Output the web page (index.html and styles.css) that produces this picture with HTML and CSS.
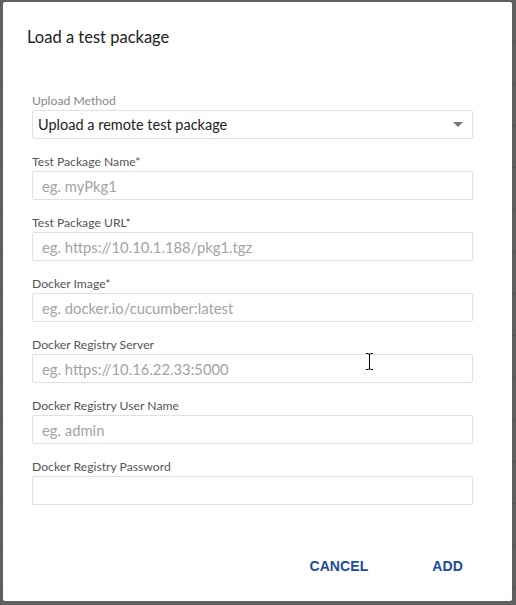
FILE: index.html
```html
<!DOCTYPE html>
<html>
<head>
<meta charset="utf-8">
<link rel="stylesheet" href="styles.css">
</head>
<body>
<div class="backdrop">
  <div class="dialog">
    <h2 class="title">Load a test package</h2>
    <form class="form">
      <div class="field">
        <label class="label label-light">Upload Method</label>
        <div class="select">
          <span class="select-value">Upload a remote test package</span>
          <span class="caret"></span>
        </div>
      </div>
      <div class="field">
        <label class="label">Test Package Name*</label>
        <div class="input"><span class="ph">eg. myPkg1</span></div>
      </div>
      <div class="field">
        <label class="label">Test Package URL*</label>
        <div class="input"><span class="ph">eg. https://10.10.1.188/pkg1.tgz</span></div>
      </div>
      <div class="field">
        <label class="label">Docker Image*</label>
        <div class="input"><span class="ph">eg. docker.io/cucumber:latest</span></div>
      </div>
      <div class="field">
        <label class="label">Docker Registry Server</label>
        <div class="input"><span class="ph">eg. https://10.16.22.33:5000</span></div>
      </div>
      <div class="field">
        <label class="label">Docker Registry User Name</label>
        <div class="input"><span class="ph">eg. admin</span></div>
      </div>
      <div class="field">
        <label class="label">Docker Registry Password</label>
        <div class="input"></div>
      </div>
    </form>
    <div class="actions">
      <button class="btn btn-cancel" type="button">CANCEL</button>
      <button class="btn btn-add" type="button">ADD</button>
    </div>
  </div>
  <svg class="cursor" width="9" height="17" viewBox="0 0 9 17">
    <path d="M1 0.5h2.5M5.5 0.5h2.5M4.5 1v15M1 16.5h2.5M5.5 16.5h2.5M3.5 1h2M3.5 16h2" stroke="#000" stroke-width="1" fill="none"/>
  </svg>
</div>
</body>
</html>
```
FILE: styles.css
```css
html, body {
  margin: 0;
  padding: 0;
}
body {
  width: 516px;
  height: 605px;
  overflow: hidden;
  background: #5f5f5f;
  font-family: "Lato", "Noto Sans", sans-serif;
}
.backdrop {
  position: relative;
  width: 516px;
  height: 605px;
  padding: 2px 0 0 3px;
  box-sizing: border-box;
  background:
    repeating-linear-gradient(to bottom, transparent 0, transparent 41px, #555 41px, #555 42px) #5f5f5f;
}
.dialog {
  width: 509px;
  height: 599px;
  background: #fff;
  border-radius: 2px;
  box-sizing: border-box;
  display: flex;
  flex-direction: column;
}
.title {
  margin: 0;
  padding: 25px 0 0 24px;
  font-size: 16.5px;
  font-weight: 400;
  color: #222;
  line-height: 20px;
}
.form {
  margin: 0;
  padding: 47px 39px 0 29px;
  display: flex;
  flex-direction: column;
  gap: 16px;
}
.field {
  display: flex;
  flex-direction: column;
  gap: 2px;
}
.label {
  font-size: 12.2px;
  line-height: 14px;
  color: #555;
}
.label-light {
  color: #888;
}
.select, .input {
  height: 29px;
  border: 1px solid #e0e0e0;
  border-radius: 2px;
  box-sizing: border-box;
  display: flex;
  align-items: center;
  padding: 0 9px 0 5px;
}
.input {
  padding-left: 9px;
}
.select-value {
  font-size: 14.5px;
  color: #222;
  flex: 1;
}
.caret {
  width: 0;
  height: 0;
  border-left: 5px solid transparent;
  border-right: 5px solid transparent;
  border-top: 5px solid #777;
}
.ph {
  font-size: 14.8px;
  color: #a3a3a3;
}
.actions {
  margin-top: auto;
  padding: 0 49px 27px 0;
  display: flex;
  justify-content: flex-end;
  gap: 64px;
}
.btn {
  background: none;
  border: none;
  padding: 0;
  font-family: "Liberation Sans", Arial, sans-serif;
  font-weight: 700;
  font-size: 14px;
  line-height: 16px;
  color: #1c4a9c;
  letter-spacing: 0.1px;
}
.cursor {
  position: absolute;
  left: 365px;
  top: 353px;
}
```
